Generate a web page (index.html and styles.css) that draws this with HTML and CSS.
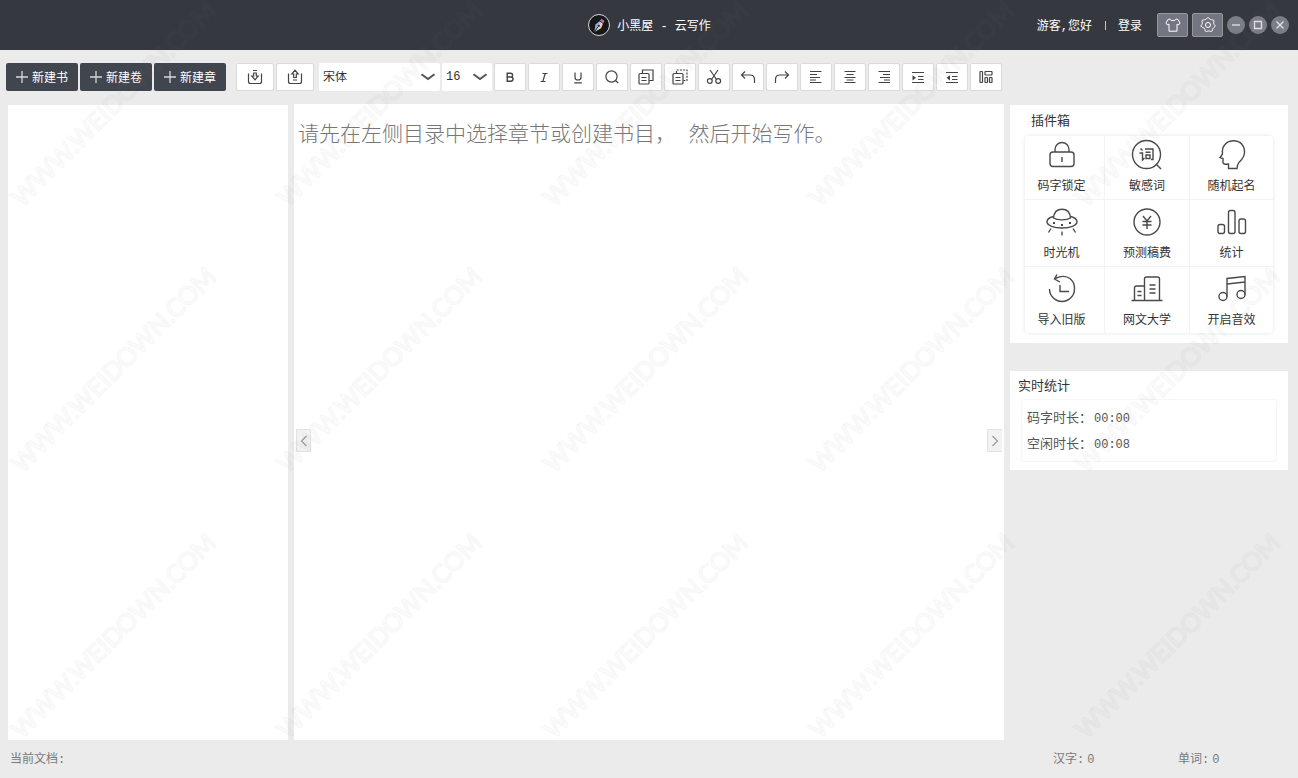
FILE: index.html
```html
<!DOCTYPE html>
<html lang="zh-CN">
<head>
<meta charset="utf-8">
<title>小黑屋 - 云写作</title>
<link rel="stylesheet" href="styles.css">
</head>
<body>
<div class="app">
  <header class="titlebar">
    <div class="brand">
      <svg class="logo" viewBox="0 0 24 24" aria-hidden="true">
        <defs><linearGradient id="nib" gradientUnits="userSpaceOnUse" x1="8" y1="10" x2="16" y2="15"><stop offset="0" stop-color="#b98ce8"/><stop offset=".3" stop-color="#6fb4f0"/><stop offset=".6" stop-color="#f5d9c0"/><stop offset="1" stop-color="#f08a6a"/></linearGradient></defs>
        <circle cx="12" cy="12" r="10.5" fill="#17181a" stroke="#d5d6d8"/>
        <path d="M14.500 5.800l3 2.200-1.200 2.200-3.400-2.400z" fill="#c96a9a"/>
        <path d="M12.400 8.200l3.600 2.500-1.800 4.500-6 3.300-.7-.5.9-6.600z" fill="url(#nib)"/>
        <path d="M8 18l3-4.200" stroke="#17181a" stroke-width="1"/><circle cx="11.800" cy="12.800" r="1.100" fill="#17181a"/>
      </svg>
      <h1 class="brand-name">小黑屋 - 云写作</h1>
    </div>
    <div class="account">
      <span>游客,您好</span>
      <span class="bar"></span>
      <a class="login" href="#login">登录</a>
      <div class="tools">
        <button class="tool" type="button" aria-label="皮肤"><svg viewBox="0 0 16 16"><path d="M5 2L2.800 2.600 1 6l1.200 1.800L4 7.200V14.200h8V7.200l1.800.6L15 6l-1.800-3.400L11 2C10.300 4.200 5.700 4.200 5 2z"/></svg></button>
        <button class="tool" type="button" aria-label="设置"><svg viewBox="0 0 16 16"><path d="M8 .8c1.100 0 1.700 1.400 2.700 1.800s2.400-.1 3 .8-.2 2.200 0 3.200 1.500 1.500 1.300 2.600-1.500 1.300-2.100 2.200-.2 2.400-1.200 2.900-1.900-.4-3-.4-2.100 1-3 .5-.5-2-1.200-2.900S1.200 10.300 1 9.200s1.100-1.600 1.300-2.600-.6-2.300 0-3.200 2-.4 3-.8S6.900.8 8 .8z"/><circle cx="8" cy="8" r="2.500"/></svg></button>
      </div>
      <div class="wins">
        <button class="win" type="button" aria-label="最小化"><svg viewBox="0 0 18 18"><path d="M5 9h8"/></svg></button>
        <button class="win" type="button" aria-label="最大化"><svg viewBox="0 0 18 18"><path d="M5.500 5.500h7v7h-7z"/></svg></button>
        <button class="win" type="button" aria-label="关闭"><svg viewBox="0 0 18 18"><path d="M5.500 5.500l7 7m0-7l-7 7"/></svg></button>
      </div>
    </div>
  </header>

  <nav class="toolbar" aria-label="工具栏">
    <div class="group">
      <button class="create" type="button"><svg viewBox="0 0 12 12"><path d="M6 0v12M0 6h12"/></svg>新建书</button>
      <button class="create" type="button"><svg viewBox="0 0 12 12"><path d="M6 0v12M0 6h12"/></svg>新建卷</button>
      <button class="create" type="button"><svg viewBox="0 0 12 12"><path d="M6 0v12M0 6h12"/></svg>新建章</button>
    </div>
    <div class="group transfer">
      <button class="icon wide" type="button" aria-label="导入"><svg viewBox="0 0 16 16"><path d="M1.500 4.500v8q0 2 2 2h9q2 0 2-2v-8M6 1.500h4M6.700 4v3H4.800L8 10.800 11.200 7H9.300V4z"/></svg></button>
      <button class="icon wide" type="button" aria-label="导出"><svg viewBox="0 0 16 16"><path d="M1.500 4.500v8q0 2 2 2h9q2 0 2-2v-8M6 11h4M6.700 8.500V5H4.800L8 1.200 11.200 5H9.300v3.500z"/></svg></button>
    </div>
    <div class="group formats">
      <div class="picker font-picker"><select aria-label="字体"><option>宋体</option><option>黑体</option></select><svg viewBox="0 0 16 8"><path d="M1.500 1.200L8 6l6.500-4.800"/></svg></div>
      <div class="picker size-picker"><select aria-label="字号"><option>16</option><option>18</option></select><svg viewBox="0 0 16 8"><path d="M1.500 1.200L8 6l6.500-4.800"/></svg></div>
      <button class="icon" type="button" aria-label="粗体"><svg viewBox="0 0 16 16"><path d="M5.200 4.300h3.300q2.100 0 2.100 1.900T8.500 8H5.200zM5.200 8h3.600q2.300 0 2.300 2.100t-2.300 2.100H5.200z" stroke-width="1.400"/></svg></button>
      <button class="icon" type="button" aria-label="斜体"><svg viewBox="0 0 16 16"><path d="M6.500 4.500h5M4.500 12.500h5M9.200 4.500L6.800 12.500"/></svg></button>
      <button class="icon" type="button" aria-label="下划线"><svg viewBox="0 0 16 16"><path d="M5 3.500v4.700q0 2.800 3 2.800t3-2.800V3.500M4.200 13.800h7.600"/></svg></button>
      <button class="icon" type="button" aria-label="查找"><svg viewBox="0 0 16 16"><circle cx="7.500" cy="7.500" r="5.600"/><path d="M11.500 11.500l2.700 2.500"/></svg></button>
      <button class="icon" type="button" aria-label="复制"><svg viewBox="0 0 16 16"><rect x="1" y="4.500" width="10" height="10.500" rx="1"/><path d="M4.500 4.500V1H15v10.500h-4M3.500 8.500h5M3.500 11.500h5"/></svg></button>
      <button class="icon" type="button" aria-label="粘贴"><svg viewBox="0 0 16 16"><rect x="1" y="4.500" width="10" height="10.500" rx="1"/><path d="M3.500 8.500h5M3.500 11.500h5"/><path d="M4.500 4V1H15v10.500h-4" stroke-dasharray="2 1.200"/></svg></button>
      <button class="icon" type="button" aria-label="剪切"><svg viewBox="0 0 16 16"><path d="M4 1l6.500 9.500M12 1L5.500 10.500"/><circle cx="3.800" cy="12" r="2.400"/><circle cx="12.200" cy="12" r="2.400"/></svg></button>
      <button class="icon" type="button" aria-label="撤销"><svg viewBox="0 0 16 16"><path d="M5 2.500L1.500 6 5 9.500M1.500 6H10q4.500 0 4.500 4.500V14"/></svg></button>
      <button class="icon" type="button" aria-label="重做"><svg viewBox="0 0 16 16"><path d="M11 2.500L14.500 6 11 9.500M14.500 6H6q-4.500 0-4.500 4.500V14"/></svg></button>
      <button class="icon" type="button" aria-label="左对齐"><svg viewBox="0 0 16 16"><path d="M2 2.500h11.500M2 5.500h7M2 8.500h10M2 11h6M2 13.500h11.500"/></svg></button>
      <button class="icon" type="button" aria-label="居中"><svg viewBox="0 0 16 16"><path d="M2.500 2.500h11M4.500 5.500h7M2.500 8.500h11M4.500 11h7M2.500 13.500h11"/></svg></button>
      <button class="icon" type="button" aria-label="右对齐"><svg viewBox="0 0 16 16"><path d="M2.500 2.500H14M7 5.500h7M4 8.500h10M8 11h6M2.500 13.500H14"/></svg></button>
      <button class="icon" type="button" aria-label="增加缩进"><svg viewBox="0 0 16 16"><path d="M2 3.500h12M8 7.500h5.500M8 10.500h5.500M2 13.500h12"/><path class="solid" d="M2.500 6.200L6 8.800l-3.500 2.600z"/></svg></button>
      <button class="icon" type="button" aria-label="减少缩进"><svg viewBox="0 0 16 16"><path d="M2 3.500h12M8 7.500h5.500M8 10.500h5.500M2 13.500h12"/><path class="solid" d="M6 6.200L2.500 8.800 6 11.400z"/></svg></button>
      <button class="icon" type="button" aria-label="排版"><svg viewBox="0 0 16 16"><rect x="2" y="2.500" width="2.500" height="11" rx=".5"/><rect x="7" y="2.500" width="7" height="3.500" rx=".5"/><rect x="7" y="8.500" width="2.500" height="5" rx=".5"/><rect x="11.500" y="8.500" width="2.500" height="5" rx=".5"/></svg></button>
    </div>
  </nav>

  <main class="workspace">
    <aside class="directory" aria-label="目录"></aside>
    <section class="editor">
      <textarea class="page" aria-label="正文" spellcheck="false">请先在左侧目录中选择章节或创建书目， 然后开始写作。</textarea>
      <button class="handle left" type="button" aria-label="收起目录"><svg viewBox="0 0 8 12"><path d="M6.500 1L1.500 6l5 5"/></svg></button>
      <button class="handle right" type="button" aria-label="收起侧栏"><svg viewBox="0 0 8 12"><path d="M1.500 1l5 5-5 5"/></svg></button>
    </section>
    <aside class="side">
      <section class="panel plugins">
        <h2>插件箱</h2>
        <div class="grid">
          <button class="plugin" type="button"><svg viewBox="0 0 32 32"><rect x="4" y="13" width="24" height="14.500" rx="3"/><path d="M9 13v-2.500a7 7 0 0 1 14 0V13M16 18v5"/></svg>码字锁定</button>
          <button class="plugin" type="button"><svg viewBox="0 0 32 32"><circle cx="15.500" cy="15.500" r="14"/><path d="M25 25l5 5"/><path d="M9.500 9.500l2 2M8.500 14h3v7l2-2M14 10h8v10.500h-2M14.500 13.200h5M15 16h4v3.500h-4z"/></svg>敏感词</button>
          <button class="plugin" type="button"><svg viewBox="0 0 32 32"><path d="M12.500 29.500v-4.500q-5.500.8-5.500-1.500v-4L4 18.500q2-2 2.500-4C5.500 7 11 1.800 17.500 1.800c7 0 11.500 5 11 12-.3 5-3 7-5.500 9.500-1.500 2-2 3.500-2 6.200z"/></svg>随机起名</button>
          <button class="plugin" type="button"><svg viewBox="0 0 32 32"><path d="M7.500 12C8 6 11 3.200 16 3.200S24 6 24.500 12c-4 2.500-13 2.500-17 0z"/><path d="M7.500 10.500c-4 1-6.500 3-6.500 5.300C1 19.500 8 22 16 22s15-2.500 15-6.200c0-2.300-2.500-4.300-6.500-5.300M5 22.500l-2.500 4M27 22.500l2.500 4M16 25.500v4"/><path d="M7 17h2M15 19h2M23 17h2" stroke-width="2"/></svg>时光机</button>
          <button class="plugin" type="button"><svg viewBox="0 0 32 32"><circle cx="16" cy="16" r="13"/><path d="M12 10l4 5 4-5M11.500 15.500h9M11.500 19h9M16 15v8"/></svg>预测稿费</button>
          <button class="plugin" type="button"><svg viewBox="0 0 32 32"><rect x="2" y="18.500" width="6.500" height="9" rx="2"/><rect x="12.500" y="4.500" width="6.500" height="23" rx="2"/><rect x="23" y="13" width="6.500" height="14.500" rx="2"/></svg>统计</button>
          <button class="plugin" type="button"><svg viewBox="0 0 32 32"><path d="M9 5.500C23-1 29 9 28.500 16a12.500 12.500 0 0 1-25 0M11 1.500L8.500 6l5.500 3M14 12v6.500h9"/></svg>导入旧版</button>
          <button class="plugin" type="button"><svg viewBox="0 0 32 32"><path d="M.5 27.500h31M13.500 27.500V6q0-2 2-2h11q2 0 2 2v21.500M3.500 27.500V15q0-2 2-2h8M18.500 12h6M18.500 16h6M18.500 20h6M6.500 18.500h4M6.500 22.500h4"/></svg>网文大学</button>
          <button class="plugin" type="button"><svg viewBox="0 0 32 32"><circle cx="7" cy="23.500" r="4"/><circle cx="25" cy="21.500" r="4"/><path d="M11 23.500V5.500L29 3.500v18M11 11l18-2"/></svg>开启音效</button>
        </div>
      </section>
      <section class="panel stats">
        <h2>实时统计</h2>
        <dl>
          <div><dt>码字时长：</dt><dd>00:00</dd></div>
          <div><dt>空闲时长：</dt><dd>00:08</dd></div>
        </dl>
      </section>
    </aside>
  </main>

  <footer class="status">
    <span class="doc">当前文档:</span>
    <span class="count">汉字:<b>0</b></span>
    <span class="count">单词:<b>0</b></span>
  </footer>
</div>
<svg class="watermark" aria-hidden="true">
  <defs><pattern id="wm" width="266" height="266" patternUnits="userSpaceOnUse"><text class="wm-text" x="22" y="208" transform="rotate(-45 22 208)">WWW.WEIDOWN.COM</text></pattern></defs>
  <rect width="100%" height="100%" fill="url(#wm)"/>
</svg>
</body>
</html>
```
FILE: styles.css
```css
* { box-sizing: border-box; }
body {
  margin: 0;
  font-family: "Liberation Mono", "Noto Sans CJK SC", monospace;
  font-size: 12px;
  color: #333;
  background: #ebebeb;
}
button, select, textarea { font: inherit; color: inherit; margin: 0; padding: 0; border: 0; }
svg { display: block; fill: none; stroke: currentColor; }
h1, h2, dl, dd { margin: 0; font-weight: 400; }
.app { display: flex; flex-direction: column; height: 100vh; }

.titlebar {
  display: grid;
  grid-template-columns: 1fr auto 1fr;
  align-items: center;
  height: 50px;
  background: #35383e;
  color: #fff;
}
.brand { grid-column: 2; display: flex; align-items: center; gap: 6px; }
.logo { width: 24px; height: 24px; stroke: none; }
.brand-name { padding-top: 4px; font-size: 12px; line-height: 18px; }
.account { display: flex; justify-content: flex-end; align-items: center; padding-right: 9px; }
.bar { width: 1px; height: 9px; margin: 0 12px 0 13px; background: #c4c5c7; }
.login { color: inherit; text-decoration: none; }
.tools { display: flex; gap: 4px; margin: 0 4px 0 15px; }
.tool {
  display: grid;
  place-items: center;
  width: 31px;
  height: 24px;
  border: 1px solid #96979b;
  border-radius: 2px;
  background: #737680;
  color: #fff;
}
.tool svg { width: 16px; height: 16px; }
.wins { display: flex; gap: 4px; }
.win { width: 18px; height: 18px; border-radius: 50%; background: #7b7e86; color: #e4e4e6; }
.win svg { width: 18px; height: 18px; stroke-width: 1.3; }

.toolbar { display: flex; align-items: center; height: 54px; padding-left: 6px; }
.group { display: flex; gap: 2px; }
.transfer { margin: 0 5px 0 10px; }
.create {
  display: flex;
  align-items: center;
  justify-content: center;
  gap: 4px;
  width: 72px;
  height: 28px;
  border-radius: 2px;
  background: #41454d;
  color: #fff;
}
.create svg { width: 12px; height: 12px; stroke: #d5d6d8; stroke-width: 1.3; }
.icon {
  display: grid;
  place-items: center;
  width: 32px;
  height: 28px;
  border: 1px solid #dadada;
  border-radius: 2px;
  background: #fff;
  color: #444;
}
.icon svg { width: 16px; height: 16px; stroke-width: 1.2; }
.icon .solid { fill: currentColor; stroke: none; }
.wide { width: 38px; }
.picker { display: grid; align-items: center; height: 28px; border-radius: 2px; background: #fff; }
.picker select { grid-area: 1 / 1; width: 100%; height: 28px; padding-left: 4px; appearance: none; background: transparent; }
.font-picker select { padding-top: 2px; }
.picker svg { grid-area: 1 / 1; justify-self: end; width: 16px; height: 8px; margin-right: 4px; stroke: #555; stroke-width: 2; pointer-events: none; }
.font-picker { width: 121px; }
.size-picker { width: 50px; }

.workspace { display: flex; gap: 6px; flex: 1; min-height: 0; padding: 0 10px 0 8px; }
.directory { width: 280px; margin-top: 1px; background: #fff; }
.editor { position: relative; flex: 1; background: #fff; }
.page {
  display: block;
  width: 100%;
  height: 100%;
  padding: 17px 4px;
  resize: none;
  outline: 0;
  background: transparent;
  color: #777;
  font-size: 21px;
  font-weight: 300;
  line-height: 30px;
}
.handle {
  position: absolute;
  top: calc(50% + 7px);
  display: grid;
  place-items: center;
  width: 15px;
  height: 23px;
  border: 1px solid #e2e2e2;
  background: #f2f2f2;
  color: #999;
}
.handle svg { width: 8px; height: 12px; stroke-width: 1.2; }
.left { left: 2px; border-radius: 0 2px 2px 0; }
.right { right: 2px; border-right: 0; border-radius: 2px 0 0 2px; }

.side { display: flex; flex-direction: column; gap: 28px; width: 278px; padding-top: 1px; }
.panel { background: #fff; }
.panel h2 { font-size: 13px; }
.plugins { padding: 0 15px 10px; }
.plugins h2 { padding: 4px 0 0 6px; line-height: 26px; }
.grid {
  display: grid;
  grid-template-columns: 80fr 85fr 83fr;
  margin-top: 1px;
  border-radius: 4px;
  box-shadow: 0 0 4px #e0e5e5;
}
.plugin {
  display: flex;
  flex-direction: column;
  align-items: center;
  gap: 7px;
  padding: 6px 0 3px;
  border: solid #f3f3f3;
  border-width: 0 1px 1px 0;
  background: transparent;
  line-height: 18px;
}
.plugin svg { width: 32px; height: 32px; stroke: #4a4a4a; stroke-width: 1.4; }
.plugin:nth-child(-n+3) { padding-top: 3px; }
.plugin:nth-child(3n+1) { padding-right: 6px; }
.plugin:nth-child(3n) { border-right: 0; }
.plugin:nth-child(n+7) { border-bottom: 0; }
.stats { padding: 0 12px 9px; }
.stats h2 { margin-left: -4px; padding-top: 2px; line-height: 27px; }
.stats dl { padding: 6px 5px 3px; border-radius: 2px; box-shadow: 0 0 2px #ddd; color: #555; }
.stats dl div { display: flex; line-height: 26px; }
.stats dt { width: 67px; font-size: 13px; }

.status { display: flex; align-items: center; height: 38px; padding: 0 0 2px 10px; color: #7a7a7a; }
.doc { flex: 1; }
.count { width: 125px; }
.count:last-child { width: 120px; }
.count b { margin-left: 3px; font-weight: 400; }

.watermark { position: fixed; inset: 0; width: 100%; height: 100%; stroke: none; pointer-events: none; }
.wm-text { font-family: Lato, sans-serif; font-size: 25px; fill: none; stroke: #808080; stroke-width: 2px; stroke-opacity: .05; }
```
